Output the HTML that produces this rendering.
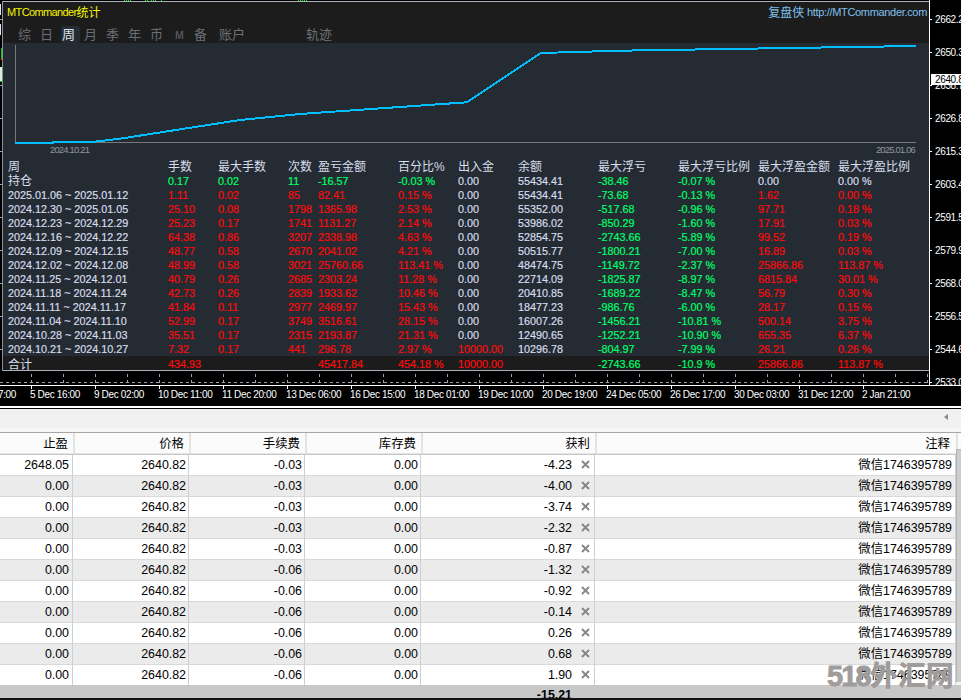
<!DOCTYPE html>
<html><head><meta charset="utf-8"><title>MTCommander</title>
<style>
html,body{margin:0;padding:0;}
body{width:961px;height:700px;overflow:hidden;position:relative;background:#f0f0f0;font-family:"Liberation Sans","Noto Sans CJK SC",sans-serif;}
.abs,.abs *{position:absolute;}
#top{position:absolute;left:0;top:0;width:961px;height:406px;background:#000;overflow:hidden;}
#panel{position:absolute;left:2px;top:1px;width:927px;height:370px;background:#252b33;border-top:1px solid #a9b0ba;border-left:1px solid #8a9099;border-bottom:1px solid #a9b0ba;box-sizing:border-box;overflow:hidden;}
#phead{position:absolute;left:0;top:0;width:926px;height:41px;background:#1c1c1c;}
.t{position:absolute;white-space:nowrap;line-height:14px;height:14px;font-size:12px;}
.st{font-size:10.8px;-webkit-text-stroke:0.18px;}
.ax{position:absolute;left:935px;color:#fff;font-size:10px;letter-spacing:-0.36px;line-height:12px;white-space:nowrap;}
.tk{position:absolute;left:930px;width:2px;height:1px;background:#fff;}
.tl{position:absolute;top:388px;color:#fff;font-size:10px;letter-spacing:-0.36px;line-height:13px;white-space:nowrap;}
.tab{position:absolute;top:26px;font-size:13px;line-height:16px;color:#6f7378;white-space:nowrap;}
#grid{position:absolute;left:0;top:455px;width:961px;}
.r{position:absolute;left:0;width:956px;height:20px;border-bottom:1px solid #d9d9d9;font-size:12.4px;line-height:20px;color:#000;}
.r.e{background:#ebebeb;}
.r.o{background:#fff;}
.c{position:absolute;top:0;text-align:right;white-space:nowrap;}
.vs{position:absolute;top:455px;width:1px;height:230px;background:#cfcfcf;}
.hs{position:absolute;top:433px;width:2px;height:20px;background:#e3e3e3;}
.x{position:absolute;top:0;left:578px;}
</style></head><body>
<div id="top">

<div style="position:absolute;left:0px;top:4px;width:1px;height:11px;background:#e4e7f7"></div>
<div style="position:absolute;left:0px;top:24px;width:1px;height:11px;background:#e4e7f7"></div>
<div style="position:absolute;left:1px;top:48px;width:1px;height:11px;background:#00d000"></div>
<div style="position:absolute;left:0px;top:59px;width:2px;height:1px;background:#ee0000"></div>
<div style="position:absolute;left:0px;top:67px;width:2px;height:14px;background:#d4f2d4"></div>
<div style="position:absolute;left:0px;top:81px;width:2px;height:1px;background:#00d000"></div>
<div style="position:absolute;left:0;top:19px;width:2px;height:1px;background:#9aa3b0"></div>
<div style="position:absolute;left:0;top:85px;width:2px;height:1px;background:#9aa3b0"></div>
<div style="position:absolute;left:0;top:118px;width:2px;height:1px;background:#9aa3b0"></div>
<div style="position:absolute;left:0;top:151px;width:2px;height:1px;background:#9aa3b0"></div>
<div style="position:absolute;left:0;top:184px;width:2px;height:1px;background:#9aa3b0"></div>
<div style="position:absolute;left:0;top:217px;width:2px;height:1px;background:#9aa3b0"></div>
<div style="position:absolute;left:0;top:250px;width:2px;height:1px;background:#9aa3b0"></div>
<div style="position:absolute;left:0;top:283px;width:2px;height:1px;background:#9aa3b0"></div>
<div style="position:absolute;left:0;top:316px;width:2px;height:1px;background:#9aa3b0"></div>
<div style="position:absolute;left:0;top:349px;width:2px;height:1px;background:#9aa3b0"></div>
<div style="position:absolute;left:124px;top:0;width:1px;height:1px;background:#00e000"></div>
<div style="position:absolute;left:126px;top:0;width:1px;height:1px;background:#00e000"></div>
<div style="position:absolute;left:128px;top:0;width:1px;height:1px;background:#00e000"></div>
<div style="position:absolute;left:130px;top:0;width:1px;height:1px;background:#00e000"></div>
<div style="position:absolute;left:145px;top:0;width:1px;height:1px;background:#00e000"></div>
<div style="position:absolute;left:147px;top:0;width:1px;height:1px;background:#00e000"></div>
<div style="position:absolute;left:151px;top:0;width:1px;height:1px;background:#00e000"></div>
<div style="position:absolute;left:153px;top:0;width:1px;height:1px;background:#00e000"></div>
<div style="position:absolute;left:155px;top:0;width:1px;height:1px;background:#00e000"></div>
<div style="position:absolute;left:161px;top:0;width:1px;height:1px;background:#00e000"></div>
<div style="position:absolute;left:298px;top:0;width:1px;height:1px;background:#00e000"></div>
<div style="position:absolute;left:300px;top:0;width:1px;height:1px;background:#00e000"></div>
<div style="position:absolute;left:302px;top:0;width:1px;height:1px;background:#00e000"></div>
<div style="position:absolute;left:304px;top:0;width:1px;height:1px;background:#00e000"></div>
<div style="position:absolute;left:306px;top:0;width:1px;height:1px;background:#00e000"></div>
<div id="panel">
<div id="phead"></div>
<div class="t" style="left:4px;top:3px;color:#f6f600;font-size:11px;letter-spacing:-0.62px;line-height:16px;height:16px"><span style="position:relative;top:-1px">MTCommander</span><span style="font-size:12px;letter-spacing:0">统计</span></div>
<div class="t" style="right:2px;top:2px;color:#7fc0ee;font-size:11px;letter-spacing:-0.32px;line-height:16px;height:16px"><span style="font-size:12px;letter-spacing:0;position:relative;top:1px">复盘侠</span> http://MTCommander.com</div>
<div style="position:absolute;left:58px;top:24px;width:19px;height:17px;background:#252b33;border-radius:3px"></div>
<div class="tab" style="left:15px;top:25px;color:#6b7076;">综</div>
<div class="tab" style="left:37px;top:25px;color:#6b7076;">日</div>
<div class="tab" style="left:59px;top:25px;color:#dfe6f0;">周</div>
<div class="tab" style="left:81px;top:25px;color:#6b7076;">月</div>
<div class="tab" style="left:103px;top:25px;color:#6b7076;">季</div>
<div class="tab" style="left:125px;top:25px;color:#6b7076;">年</div>
<div class="tab" style="left:147px;top:25px;color:#6b7076;">币</div>
<div class="tab" style="left:172px;top:25px;color:#50555c;font-size:10.5px;font-weight:bold;letter-spacing:-0.5px;">M</div>
<div class="tab" style="left:191px;top:25px;color:#6b7076;">备</div>
<div class="tab" style="left:216px;top:25px;color:#6b7076;">账户</div>
<div class="tab" style="left:303px;top:25px;color:#6b7076;">轨迹</div>
<svg style="position:absolute;left:0;top:0" width="926" height="369" viewBox="3 2 926 369">
<path d="M15.5 45V142.5H916" fill="none" stroke="#787878" stroke-width="1"/>
<polyline points="15,143 53,143 53,142 92,142 120,138.7 240,120 300,114 466.7,102.3 540.6,53 620,50.7 916,46" fill="none" stroke="#00bfff" stroke-width="2" stroke-linejoin="round" shape-rendering="crispEdges"/>
</svg>
<div class="t" style="left:47px;top:141px;color:#9097a0;font-size:9.4px;letter-spacing:-0.78px">2024.10.21</div>
<div class="t" style="right:14px;top:141px;color:#9097a0;font-size:9.4px;letter-spacing:-0.78px">2025.01.06</div>
<div style="position:absolute;left:0;top:354px;width:926px;height:15px;background:#1c1c1c"></div>
<div class="t" style="left:5px;top:158px;color:#d6deec;font-size:12px">周</div>
<div class="t" style="left:165px;top:158px;color:#d6deec;font-size:12px">手数</div>
<div class="t" style="left:215px;top:158px;color:#d6deec;font-size:12px">最大手数</div>
<div class="t" style="left:285px;top:158px;color:#d6deec;font-size:12px">次数</div>
<div class="t" style="left:315px;top:158px;color:#d6deec;font-size:12px">盈亏金额</div>
<div class="t" style="left:395px;top:158px;color:#d6deec;font-size:12px">百分比%</div>
<div class="t" style="left:455px;top:158px;color:#d6deec;font-size:12px">出入金</div>
<div class="t" style="left:515px;top:158px;color:#d6deec;font-size:12px">余额</div>
<div class="t" style="left:595px;top:158px;color:#d6deec;font-size:12px">最大浮亏</div>
<div class="t" style="left:675px;top:158px;color:#d6deec;font-size:12px">最大浮亏比例</div>
<div class="t" style="left:755px;top:158px;color:#d6deec;font-size:12px">最大浮盈金额</div>
<div class="t" style="left:835px;top:158px;color:#d6deec;font-size:12px">最大浮盈比例</div>
<div class="t" style="left:5px;top:172px;color:#d6deec">持仓</div>
<div class="t st" style="left:165px;top:172px;color:#00ff6a">0.17</div>
<div class="t st" style="left:215px;top:172px;color:#00ff6a">0.02</div>
<div class="t st" style="left:285px;top:172px;color:#00ff6a">11</div>
<div class="t st" style="left:315px;top:172px;color:#00ff6a">-16.57</div>
<div class="t st" style="left:395px;top:172px;color:#00ff6a">-0.03 %</div>
<div class="t st" style="left:455px;top:172px;color:#d6deec">0.00</div>
<div class="t st" style="left:515px;top:172px;color:#d6deec">55434.41</div>
<div class="t st" style="left:595px;top:172px;color:#00ff6a">-38.46</div>
<div class="t st" style="left:675px;top:172px;color:#00ff6a">-0.07 %</div>
<div class="t st" style="left:755px;top:172px;color:#d6deec">0.00</div>
<div class="t st" style="left:835px;top:172px;color:#d6deec">0.00 %</div>
<div class="t st" style="left:5px;top:186px;color:#d6deec">2025.01.06 ~ 2025.01.12</div>
<div class="t st" style="left:165px;top:186px;color:#ff0a0a">1.11</div>
<div class="t st" style="left:215px;top:186px;color:#ff0a0a">0.02</div>
<div class="t st" style="left:285px;top:186px;color:#ff0a0a">85</div>
<div class="t st" style="left:315px;top:186px;color:#ff0a0a">82.41</div>
<div class="t st" style="left:395px;top:186px;color:#ff0a0a">0.15 %</div>
<div class="t st" style="left:455px;top:186px;color:#d6deec">0.00</div>
<div class="t st" style="left:515px;top:186px;color:#d6deec">55434.41</div>
<div class="t st" style="left:595px;top:186px;color:#00ff6a">-73.68</div>
<div class="t st" style="left:675px;top:186px;color:#00ff6a">-0.13 %</div>
<div class="t st" style="left:755px;top:186px;color:#ff0a0a">1.62</div>
<div class="t st" style="left:835px;top:186px;color:#ff0a0a">0.00 %</div>
<div class="t st" style="left:5px;top:200px;color:#d6deec">2024.12.30 ~ 2025.01.05</div>
<div class="t st" style="left:165px;top:200px;color:#ff0a0a">25.10</div>
<div class="t st" style="left:215px;top:200px;color:#ff0a0a">0.08</div>
<div class="t st" style="left:285px;top:200px;color:#ff0a0a">1798</div>
<div class="t st" style="left:315px;top:200px;color:#ff0a0a">1365.98</div>
<div class="t st" style="left:395px;top:200px;color:#ff0a0a">2.53 %</div>
<div class="t st" style="left:455px;top:200px;color:#d6deec">0.00</div>
<div class="t st" style="left:515px;top:200px;color:#d6deec">55352.00</div>
<div class="t st" style="left:595px;top:200px;color:#00ff6a">-517.68</div>
<div class="t st" style="left:675px;top:200px;color:#00ff6a">-0.96 %</div>
<div class="t st" style="left:755px;top:200px;color:#ff0a0a">97.71</div>
<div class="t st" style="left:835px;top:200px;color:#ff0a0a">0.18 %</div>
<div class="t st" style="left:5px;top:214px;color:#d6deec">2024.12.23 ~ 2024.12.29</div>
<div class="t st" style="left:165px;top:214px;color:#ff0a0a">25.23</div>
<div class="t st" style="left:215px;top:214px;color:#ff0a0a">0.17</div>
<div class="t st" style="left:285px;top:214px;color:#ff0a0a">1741</div>
<div class="t st" style="left:315px;top:214px;color:#ff0a0a">1131.27</div>
<div class="t st" style="left:395px;top:214px;color:#ff0a0a">2.14 %</div>
<div class="t st" style="left:455px;top:214px;color:#d6deec">0.00</div>
<div class="t st" style="left:515px;top:214px;color:#d6deec">53986.02</div>
<div class="t st" style="left:595px;top:214px;color:#00ff6a">-850.29</div>
<div class="t st" style="left:675px;top:214px;color:#00ff6a">-1.60 %</div>
<div class="t st" style="left:755px;top:214px;color:#ff0a0a">17.91</div>
<div class="t st" style="left:835px;top:214px;color:#ff0a0a">0.03 %</div>
<div class="t st" style="left:5px;top:228px;color:#d6deec">2024.12.16 ~ 2024.12.22</div>
<div class="t st" style="left:165px;top:228px;color:#ff0a0a">64.38</div>
<div class="t st" style="left:215px;top:228px;color:#ff0a0a">0.86</div>
<div class="t st" style="left:285px;top:228px;color:#ff0a0a">3207</div>
<div class="t st" style="left:315px;top:228px;color:#ff0a0a">2338.98</div>
<div class="t st" style="left:395px;top:228px;color:#ff0a0a">4.63 %</div>
<div class="t st" style="left:455px;top:228px;color:#d6deec">0.00</div>
<div class="t st" style="left:515px;top:228px;color:#d6deec">52854.75</div>
<div class="t st" style="left:595px;top:228px;color:#00ff6a">-2743.66</div>
<div class="t st" style="left:675px;top:228px;color:#00ff6a">-5.89 %</div>
<div class="t st" style="left:755px;top:228px;color:#ff0a0a">99.52</div>
<div class="t st" style="left:835px;top:228px;color:#ff0a0a">0.19 %</div>
<div class="t st" style="left:5px;top:242px;color:#d6deec">2024.12.09 ~ 2024.12.15</div>
<div class="t st" style="left:165px;top:242px;color:#ff0a0a">48.77</div>
<div class="t st" style="left:215px;top:242px;color:#ff0a0a">0.58</div>
<div class="t st" style="left:285px;top:242px;color:#ff0a0a">2670</div>
<div class="t st" style="left:315px;top:242px;color:#ff0a0a">2041.02</div>
<div class="t st" style="left:395px;top:242px;color:#ff0a0a">4.21 %</div>
<div class="t st" style="left:455px;top:242px;color:#d6deec">0.00</div>
<div class="t st" style="left:515px;top:242px;color:#d6deec">50515.77</div>
<div class="t st" style="left:595px;top:242px;color:#00ff6a">-1800.21</div>
<div class="t st" style="left:675px;top:242px;color:#00ff6a">-7.00 %</div>
<div class="t st" style="left:755px;top:242px;color:#ff0a0a">16.89</div>
<div class="t st" style="left:835px;top:242px;color:#ff0a0a">0.03 %</div>
<div class="t st" style="left:5px;top:256px;color:#d6deec">2024.12.02 ~ 2024.12.08</div>
<div class="t st" style="left:165px;top:256px;color:#ff0a0a">48.99</div>
<div class="t st" style="left:215px;top:256px;color:#ff0a0a">0.58</div>
<div class="t st" style="left:285px;top:256px;color:#ff0a0a">3021</div>
<div class="t st" style="left:315px;top:256px;color:#ff0a0a">25760.66</div>
<div class="t st" style="left:395px;top:256px;color:#ff0a0a">113.41 %</div>
<div class="t st" style="left:455px;top:256px;color:#d6deec">0.00</div>
<div class="t st" style="left:515px;top:256px;color:#d6deec">48474.75</div>
<div class="t st" style="left:595px;top:256px;color:#00ff6a">-1149.72</div>
<div class="t st" style="left:675px;top:256px;color:#00ff6a">-2.37 %</div>
<div class="t st" style="left:755px;top:256px;color:#ff0a0a">25866.86</div>
<div class="t st" style="left:835px;top:256px;color:#ff0a0a">113.87 %</div>
<div class="t st" style="left:5px;top:270px;color:#d6deec">2024.11.25 ~ 2024.12.01</div>
<div class="t st" style="left:165px;top:270px;color:#ff0a0a">40.79</div>
<div class="t st" style="left:215px;top:270px;color:#ff0a0a">0.26</div>
<div class="t st" style="left:285px;top:270px;color:#ff0a0a">2685</div>
<div class="t st" style="left:315px;top:270px;color:#ff0a0a">2303.24</div>
<div class="t st" style="left:395px;top:270px;color:#ff0a0a">11.28 %</div>
<div class="t st" style="left:455px;top:270px;color:#d6deec">0.00</div>
<div class="t st" style="left:515px;top:270px;color:#d6deec">22714.09</div>
<div class="t st" style="left:595px;top:270px;color:#00ff6a">-1825.87</div>
<div class="t st" style="left:675px;top:270px;color:#00ff6a">-8.97 %</div>
<div class="t st" style="left:755px;top:270px;color:#ff0a0a">6815.84</div>
<div class="t st" style="left:835px;top:270px;color:#ff0a0a">30.01 %</div>
<div class="t st" style="left:5px;top:284px;color:#d6deec">2024.11.18 ~ 2024.11.24</div>
<div class="t st" style="left:165px;top:284px;color:#ff0a0a">42.73</div>
<div class="t st" style="left:215px;top:284px;color:#ff0a0a">0.26</div>
<div class="t st" style="left:285px;top:284px;color:#ff0a0a">2839</div>
<div class="t st" style="left:315px;top:284px;color:#ff0a0a">1933.62</div>
<div class="t st" style="left:395px;top:284px;color:#ff0a0a">10.46 %</div>
<div class="t st" style="left:455px;top:284px;color:#d6deec">0.00</div>
<div class="t st" style="left:515px;top:284px;color:#d6deec">20410.85</div>
<div class="t st" style="left:595px;top:284px;color:#00ff6a">-1689.22</div>
<div class="t st" style="left:675px;top:284px;color:#00ff6a">-8.47 %</div>
<div class="t st" style="left:755px;top:284px;color:#ff0a0a">56.79</div>
<div class="t st" style="left:835px;top:284px;color:#ff0a0a">0.30 %</div>
<div class="t st" style="left:5px;top:298px;color:#d6deec">2024.11.11 ~ 2024.11.17</div>
<div class="t st" style="left:165px;top:298px;color:#ff0a0a">41.84</div>
<div class="t st" style="left:215px;top:298px;color:#ff0a0a">0.11</div>
<div class="t st" style="left:285px;top:298px;color:#ff0a0a">2977</div>
<div class="t st" style="left:315px;top:298px;color:#ff0a0a">2469.97</div>
<div class="t st" style="left:395px;top:298px;color:#ff0a0a">15.43 %</div>
<div class="t st" style="left:455px;top:298px;color:#d6deec">0.00</div>
<div class="t st" style="left:515px;top:298px;color:#d6deec">18477.23</div>
<div class="t st" style="left:595px;top:298px;color:#00ff6a">-986.76</div>
<div class="t st" style="left:675px;top:298px;color:#00ff6a">-6.00 %</div>
<div class="t st" style="left:755px;top:298px;color:#ff0a0a">28.17</div>
<div class="t st" style="left:835px;top:298px;color:#ff0a0a">0.15 %</div>
<div class="t st" style="left:5px;top:312px;color:#d6deec">2024.11.04 ~ 2024.11.10</div>
<div class="t st" style="left:165px;top:312px;color:#ff0a0a">52.99</div>
<div class="t st" style="left:215px;top:312px;color:#ff0a0a">0.17</div>
<div class="t st" style="left:285px;top:312px;color:#ff0a0a">3749</div>
<div class="t st" style="left:315px;top:312px;color:#ff0a0a">3516.61</div>
<div class="t st" style="left:395px;top:312px;color:#ff0a0a">28.15 %</div>
<div class="t st" style="left:455px;top:312px;color:#d6deec">0.00</div>
<div class="t st" style="left:515px;top:312px;color:#d6deec">16007.26</div>
<div class="t st" style="left:595px;top:312px;color:#00ff6a">-1456.21</div>
<div class="t st" style="left:675px;top:312px;color:#00ff6a">-10.81 %</div>
<div class="t st" style="left:755px;top:312px;color:#ff0a0a">500.14</div>
<div class="t st" style="left:835px;top:312px;color:#ff0a0a">3.75 %</div>
<div class="t st" style="left:5px;top:326px;color:#d6deec">2024.10.28 ~ 2024.11.03</div>
<div class="t st" style="left:165px;top:326px;color:#ff0a0a">35.51</div>
<div class="t st" style="left:215px;top:326px;color:#ff0a0a">0.17</div>
<div class="t st" style="left:285px;top:326px;color:#ff0a0a">2315</div>
<div class="t st" style="left:315px;top:326px;color:#ff0a0a">2193.87</div>
<div class="t st" style="left:395px;top:326px;color:#ff0a0a">21.31 %</div>
<div class="t st" style="left:455px;top:326px;color:#d6deec">0.00</div>
<div class="t st" style="left:515px;top:326px;color:#d6deec">12490.65</div>
<div class="t st" style="left:595px;top:326px;color:#00ff6a">-1252.21</div>
<div class="t st" style="left:675px;top:326px;color:#00ff6a">-10.90 %</div>
<div class="t st" style="left:755px;top:326px;color:#ff0a0a">655.35</div>
<div class="t st" style="left:835px;top:326px;color:#ff0a0a">6.37 %</div>
<div class="t st" style="left:5px;top:340px;color:#d6deec">2024.10.21 ~ 2024.10.27</div>
<div class="t st" style="left:165px;top:340px;color:#ff0a0a">7.32</div>
<div class="t st" style="left:215px;top:340px;color:#ff0a0a">0.17</div>
<div class="t st" style="left:285px;top:340px;color:#ff0a0a">441</div>
<div class="t st" style="left:315px;top:340px;color:#ff0a0a">296.78</div>
<div class="t st" style="left:395px;top:340px;color:#ff0a0a">2.97 %</div>
<div class="t st" style="left:455px;top:340px;color:#ff0a0a">10000.00</div>
<div class="t st" style="left:515px;top:340px;color:#d6deec">10296.78</div>
<div class="t st" style="left:595px;top:340px;color:#00ff6a">-804.97</div>
<div class="t st" style="left:675px;top:340px;color:#00ff6a">-7.99 %</div>
<div class="t st" style="left:755px;top:340px;color:#ff0a0a">26.21</div>
<div class="t st" style="left:835px;top:340px;color:#ff0a0a">0.26 %</div>
<div class="t" style="left:5px;top:356px;color:#d6deec">合计</div>
<div class="t st" style="left:165px;top:355px;color:#ff0a0a">434.93</div>
<div class="t st" style="left:315px;top:355px;color:#ff0a0a">45417.84</div>
<div class="t st" style="left:395px;top:355px;color:#ff0a0a">454.18 %</div>
<div class="t st" style="left:455px;top:355px;color:#ff0a0a">10000.00</div>
<div class="t st" style="left:595px;top:355px;color:#00ff6a">-2743.66</div>
<div class="t st" style="left:675px;top:355px;color:#00ff6a">-10.9 %</div>
<div class="t st" style="left:755px;top:355px;color:#ff0a0a">25866.86</div>
<div class="t st" style="left:835px;top:355px;color:#ff0a0a">113.87 %</div>
</div>
<div style="position:absolute;left:929px;top:0;width:1px;height:386px;background:#fff"></div>
<div class="tk" style="top:19px"></div>
<div class="ax" style="top:14px">2662.25</div>
<div class="tk" style="top:52px"></div>
<div class="ax" style="top:47px">2650.35</div>
<div class="tk" style="top:85px"></div>
<div class="ax" style="top:80px">2638.75</div>
<div class="tk" style="top:118px"></div>
<div class="ax" style="top:113px">2626.85</div>
<div class="tk" style="top:151px"></div>
<div class="ax" style="top:146px">2615.35</div>
<div class="tk" style="top:184px"></div>
<div class="ax" style="top:179px">2603.45</div>
<div class="tk" style="top:217px"></div>
<div class="ax" style="top:212px">2591.55</div>
<div class="tk" style="top:250px"></div>
<div class="ax" style="top:245px">2579.95</div>
<div class="tk" style="top:283px"></div>
<div class="ax" style="top:278px">2568.05</div>
<div class="tk" style="top:316px"></div>
<div class="ax" style="top:311px">2556.55</div>
<div class="tk" style="top:349px"></div>
<div class="ax" style="top:344px">2544.65</div>
<div class="tk" style="top:382px"></div>
<div class="ax" style="top:377px">2533.05</div>
<div style="position:absolute;left:931px;top:74px;width:30px;height:11px;background:#fff"></div>
<div class="ax" style="top:74px;color:#000">2640.82</div>
<svg style="position:absolute;left:0;top:370px" width="961" height="20">
<g stroke="#9aa3b0" stroke-width="1" stroke-dasharray="3 3" fill="none">
<path d="M0 12.5H929"/>
<path d="M31.5 -2V15"/>
<path d="M63.5 -2V15"/>
<path d="M95.5 -2V15"/>
<path d="M127.5 -2V15"/>
<path d="M159.5 -2V15"/>
<path d="M191.5 -2V15"/>
<path d="M223.5 -2V15"/>
<path d="M255.5 -2V15"/>
<path d="M287.5 -2V15"/>
<path d="M319.5 -2V15"/>
<path d="M351.5 -2V15"/>
<path d="M383.5 -2V15"/>
<path d="M415.5 -2V15"/>
<path d="M447.5 -2V15"/>
<path d="M479.5 -2V15"/>
<path d="M511.5 -2V15"/>
<path d="M543.5 -2V15"/>
<path d="M575.5 -2V15"/>
<path d="M607.5 -2V15"/>
<path d="M639.5 -2V15"/>
<path d="M671.5 -2V15"/>
<path d="M703.5 -2V15"/>
<path d="M735.5 -2V15"/>
<path d="M767.5 -2V15"/>
<path d="M799.5 -2V15"/>
<path d="M831.5 -2V15"/>
<path d="M863.5 -2V15"/>
<path d="M895.5 -2V15"/>
<path d="M927.5 -2V15"/>
</g><path d="M0 15.5H961" stroke="#fff"/>
<path d="M31.5 15V19" stroke="#fff"/>
<path d="M95.5 15V19" stroke="#fff"/>
<path d="M159.5 15V19" stroke="#fff"/>
<path d="M223.5 15V19" stroke="#fff"/>
<path d="M287.5 15V19" stroke="#fff"/>
<path d="M351.5 15V19" stroke="#fff"/>
<path d="M415.5 15V19" stroke="#fff"/>
<path d="M479.5 15V19" stroke="#fff"/>
<path d="M543.5 15V19" stroke="#fff"/>
<path d="M607.5 15V19" stroke="#fff"/>
<path d="M671.5 15V19" stroke="#fff"/>
<path d="M735.5 15V19" stroke="#fff"/>
<path d="M799.5 15V19" stroke="#fff"/>
<path d="M863.5 15V19" stroke="#fff"/>
</svg>
<div class="tl" style="left:-2px">7:00</div>
<div class="tl" style="left:30px">5 Dec 16:00</div>
<div class="tl" style="left:94px">9 Dec 02:00</div>
<div class="tl" style="left:158px">10 Dec 11:00</div>
<div class="tl" style="left:222px">11 Dec 20:00</div>
<div class="tl" style="left:286px">13 Dec 06:00</div>
<div class="tl" style="left:350px">16 Dec 15:00</div>
<div class="tl" style="left:414px">18 Dec 01:00</div>
<div class="tl" style="left:478px">19 Dec 10:00</div>
<div class="tl" style="left:542px">20 Dec 19:00</div>
<div class="tl" style="left:606px">24 Dec 05:00</div>
<div class="tl" style="left:670px">26 Dec 17:00</div>
<div class="tl" style="left:734px">30 Dec 03:00</div>
<div class="tl" style="left:798px">31 Dec 12:00</div>
<div class="tl" style="left:862px">2 Jan 21:00</div>
</div>
<div style="position:absolute;left:0;top:406px;width:961px;height:2px;background:#fff"></div>
<div style="position:absolute;left:0;top:408px;width:961px;height:1px;background:#000"></div>
<div style="position:absolute;left:0;top:409px;width:961px;height:23px;background:#f0f0f0"></div>
<div style="position:absolute;left:944px;top:414px;width:0;height:0;border-top:3.5px solid transparent;border-bottom:3.5px solid transparent;border-right:4px solid #8a8a8a"></div>
<div style="position:absolute;left:0;top:428px;width:961px;height:4px;background:#f6f6f6"></div>
<div style="position:absolute;left:0;top:432px;width:961px;height:1px;background:#a6a6a6"></div>
<div style="position:absolute;left:0;top:433px;width:961px;height:20px;background:#fbfbfb;border-bottom:1px solid #e6e6e6;font-size:12.4px;line-height:22px">
<div class="c" style="right:893px">止盈</div>
<div class="c" style="right:777px">价格</div>
<div class="c" style="right:661px">手续费</div>
<div class="c" style="right:545px">库存费</div>
<div class="c" style="right:371px">获利</div>
<div class="c" style="right:11px">注释</div>
</div>
<div style="position:absolute;left:0;top:454px;width:957px;height:1px;background:#c6c6c6"></div>
<div id="grid">
<div class="r o" style="top:0px">
<div class="c" style="right:887px">2648.05</div>
<div class="c" style="right:770px">2640.82</div>
<div class="c" style="right:654px">-0.03</div>
<div class="c" style="right:538px">0.00</div>
<div class="c" style="right:384px">-4.23</div>
<div class="c" style="right:4px">微信1746395789</div>
<svg class="x" width="16" height="20" viewBox="0 0 16 20"><path d="M4 6l7 7m0-7l-7 7" stroke="#858585" stroke-width="1.8" fill="none"/></svg></div>
<div class="r e" style="top:21px">
<div class="c" style="right:887px">0.00</div>
<div class="c" style="right:770px">2640.82</div>
<div class="c" style="right:654px">-0.03</div>
<div class="c" style="right:538px">0.00</div>
<div class="c" style="right:384px">-4.00</div>
<div class="c" style="right:4px">微信1746395789</div>
<svg class="x" width="16" height="20" viewBox="0 0 16 20"><path d="M4 6l7 7m0-7l-7 7" stroke="#858585" stroke-width="1.8" fill="none"/></svg></div>
<div class="r o" style="top:42px">
<div class="c" style="right:887px">0.00</div>
<div class="c" style="right:770px">2640.82</div>
<div class="c" style="right:654px">-0.03</div>
<div class="c" style="right:538px">0.00</div>
<div class="c" style="right:384px">-3.74</div>
<div class="c" style="right:4px">微信1746395789</div>
<svg class="x" width="16" height="20" viewBox="0 0 16 20"><path d="M4 6l7 7m0-7l-7 7" stroke="#858585" stroke-width="1.8" fill="none"/></svg></div>
<div class="r e" style="top:63px">
<div class="c" style="right:887px">0.00</div>
<div class="c" style="right:770px">2640.82</div>
<div class="c" style="right:654px">-0.03</div>
<div class="c" style="right:538px">0.00</div>
<div class="c" style="right:384px">-2.32</div>
<div class="c" style="right:4px">微信1746395789</div>
<svg class="x" width="16" height="20" viewBox="0 0 16 20"><path d="M4 6l7 7m0-7l-7 7" stroke="#858585" stroke-width="1.8" fill="none"/></svg></div>
<div class="r o" style="top:84px">
<div class="c" style="right:887px">0.00</div>
<div class="c" style="right:770px">2640.82</div>
<div class="c" style="right:654px">-0.03</div>
<div class="c" style="right:538px">0.00</div>
<div class="c" style="right:384px">-0.87</div>
<div class="c" style="right:4px">微信1746395789</div>
<svg class="x" width="16" height="20" viewBox="0 0 16 20"><path d="M4 6l7 7m0-7l-7 7" stroke="#858585" stroke-width="1.8" fill="none"/></svg></div>
<div class="r e" style="top:105px">
<div class="c" style="right:887px">0.00</div>
<div class="c" style="right:770px">2640.82</div>
<div class="c" style="right:654px">-0.06</div>
<div class="c" style="right:538px">0.00</div>
<div class="c" style="right:384px">-1.32</div>
<div class="c" style="right:4px">微信1746395789</div>
<svg class="x" width="16" height="20" viewBox="0 0 16 20"><path d="M4 6l7 7m0-7l-7 7" stroke="#858585" stroke-width="1.8" fill="none"/></svg></div>
<div class="r o" style="top:126px">
<div class="c" style="right:887px">0.00</div>
<div class="c" style="right:770px">2640.82</div>
<div class="c" style="right:654px">-0.06</div>
<div class="c" style="right:538px">0.00</div>
<div class="c" style="right:384px">-0.92</div>
<div class="c" style="right:4px">微信1746395789</div>
<svg class="x" width="16" height="20" viewBox="0 0 16 20"><path d="M4 6l7 7m0-7l-7 7" stroke="#858585" stroke-width="1.8" fill="none"/></svg></div>
<div class="r e" style="top:147px">
<div class="c" style="right:887px">0.00</div>
<div class="c" style="right:770px">2640.82</div>
<div class="c" style="right:654px">-0.06</div>
<div class="c" style="right:538px">0.00</div>
<div class="c" style="right:384px">-0.14</div>
<div class="c" style="right:4px">微信1746395789</div>
<svg class="x" width="16" height="20" viewBox="0 0 16 20"><path d="M4 6l7 7m0-7l-7 7" stroke="#858585" stroke-width="1.8" fill="none"/></svg></div>
<div class="r o" style="top:168px">
<div class="c" style="right:887px">0.00</div>
<div class="c" style="right:770px">2640.82</div>
<div class="c" style="right:654px">-0.06</div>
<div class="c" style="right:538px">0.00</div>
<div class="c" style="right:384px">0.26</div>
<div class="c" style="right:4px">微信1746395789</div>
<svg class="x" width="16" height="20" viewBox="0 0 16 20"><path d="M4 6l7 7m0-7l-7 7" stroke="#858585" stroke-width="1.8" fill="none"/></svg></div>
<div class="r e" style="top:189px">
<div class="c" style="right:887px">0.00</div>
<div class="c" style="right:770px">2640.82</div>
<div class="c" style="right:654px">-0.06</div>
<div class="c" style="right:538px">0.00</div>
<div class="c" style="right:384px">0.68</div>
<div class="c" style="right:4px">微信1746395789</div>
<svg class="x" width="16" height="20" viewBox="0 0 16 20"><path d="M4 6l7 7m0-7l-7 7" stroke="#858585" stroke-width="1.8" fill="none"/></svg></div>
<div class="r o" style="top:210px">
<div class="c" style="right:887px">0.00</div>
<div class="c" style="right:770px">2640.82</div>
<div class="c" style="right:654px">-0.06</div>
<div class="c" style="right:538px">0.00</div>
<div class="c" style="right:384px">1.90</div>
<div class="c" style="right:4px">微信1746395789</div>
<svg class="x" width="16" height="20" viewBox="0 0 16 20"><path d="M4 6l7 7m0-7l-7 7" stroke="#858585" stroke-width="1.8" fill="none"/></svg></div>
</div>
<div class="vs" style="left:72px"></div>
<div class="hs" style="left:73px"></div>
<div class="vs" style="left:188px"></div>
<div class="hs" style="left:189px"></div>
<div class="vs" style="left:304px"></div>
<div class="hs" style="left:305px"></div>
<div class="vs" style="left:420px"></div>
<div class="hs" style="left:421px"></div>
<div class="vs" style="left:594px"></div>
<div class="hs" style="left:595px"></div>
<div class="vs" style="left:955px"></div>
<div class="hs" style="left:956px"></div>
<div style="position:absolute;left:0;top:685px;width:961px;height:15px;background:#c8c8c8"></div>
<div class="c" style="position:absolute;top:687px;right:389px;font-weight:bold;font-size:12.4px;line-height:16px">-15.21</div>
<div style="position:absolute;left:0;top:698px;width:961px;height:2px;background:#111"></div>
<div style="position:absolute;left:956px;top:449px;width:5px;height:233px;background:#cdcdcd;border-left:1px solid #b4b4b4;border-top:1px solid #b4b4b4;box-sizing:border-box"></div>
<div style="position:absolute;left:957px;top:682px;width:4px;height:3px;background:#f4f4f4"></div>
<div style="position:absolute;left:827px;top:656px;font-size:28px;line-height:40px;font-weight:900;color:#a09c9c;white-space:nowrap;font-family:'Liberation Sans','Noto Sans CJK SC',sans-serif"><span style="font-size:29px;letter-spacing:-1.9px;font-weight:bold;-webkit-text-stroke:0.8px #a09c9c">518</span>外汇网</div>
</body></html>
